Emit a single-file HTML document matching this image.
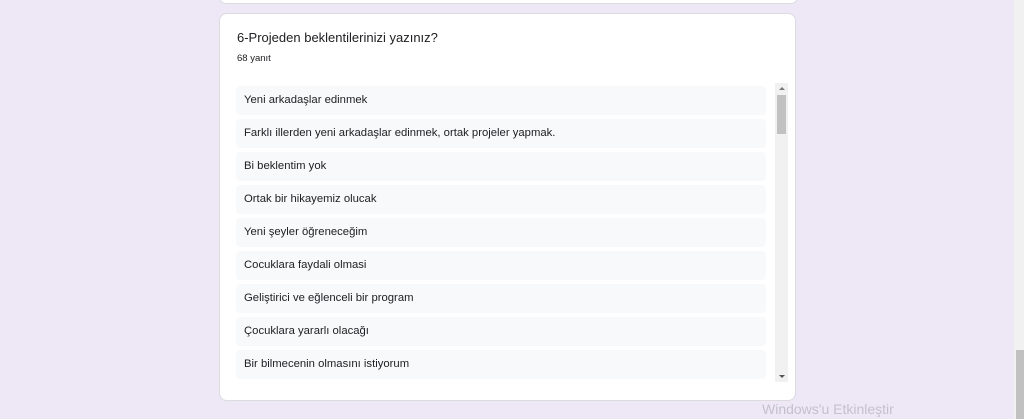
<!DOCTYPE html><html><head><style>
body{margin:0;width:1024px;height:419px;background:#ede7f6;font-family:"Liberation Sans",Arial,sans-serif;overflow:hidden;position:relative}
.prev{position:absolute;left:219px;top:-10px;width:577px;height:12px;background:#fff;border:1px solid #dadce0;border-radius:8px}
.card{position:absolute;left:219px;top:13px;width:575px;height:386px;background:#fff;border:1px solid #dadce0;border-radius:8px}
.t{position:absolute;left:17px;top:16px;font-size:13px;color:#202124}
.c{position:absolute;left:17px;top:39px;font-size:9.5px;color:#202124}
.list{position:absolute;left:16px;top:72px;width:530px;height:295px;overflow:hidden}
.it{height:29px;margin-bottom:4px;background:#f8f9fa;border-radius:4px;font-size:11.3px;color:#202124;line-height:29px;padding-left:8px}
.sb{position:absolute;left:555px;top:69px;width:13px;height:299px;background:#f1f1f1}
.th{position:absolute;left:2px;top:12px;width:9px;height:39px;background:#c1c1c1}
.ar{position:absolute;left:4px;width:0;height:0;border-left:3px solid transparent;border-right:3px solid transparent}
.ps{position:absolute;left:1014px;top:0;width:10px;height:419px;background:#f1f1f1}
.pt{position:absolute;left:2px;top:350px;width:8px;height:69px;background:#c1c1c1}
.w{position:absolute;left:762px;top:401px;font-size:14px;color:#c4c0cc}
</style></head><body>
<div class="prev"></div>
<div class="card">
<div class="t">6-Projeden beklentilerinizi yazınız?</div>
<div class="c">68 yanıt</div>
<div class="list">
<div class="it">Yeni arkadaşlar edinmek</div>
<div class="it">Farklı illerden yeni arkadaşlar edinmek, ortak projeler yapmak.</div>
<div class="it">Bi beklentim yok</div>
<div class="it">Ortak bir hikayemiz olucak</div>
<div class="it">Yeni şeyler öğreneceğim</div>
<div class="it">Cocuklara faydali olmasi</div>
<div class="it">Geliştirici ve eğlenceli bir program</div>
<div class="it">Çocuklara yararlı olacağı</div>
<div class="it">Bir bilmecenin olmasını istiyorum</div>
</div>
<div class="sb"><div class="ar" style="top:4px;border-bottom:3px solid #777"></div><div class="th"></div><div class="ar" style="top:292px;border-top:3px solid #555"></div></div>
</div>
<div class="w">Windows'u Etkinleştir</div>
<div class="ps"><div class="pt"></div></div>
</body></html>
